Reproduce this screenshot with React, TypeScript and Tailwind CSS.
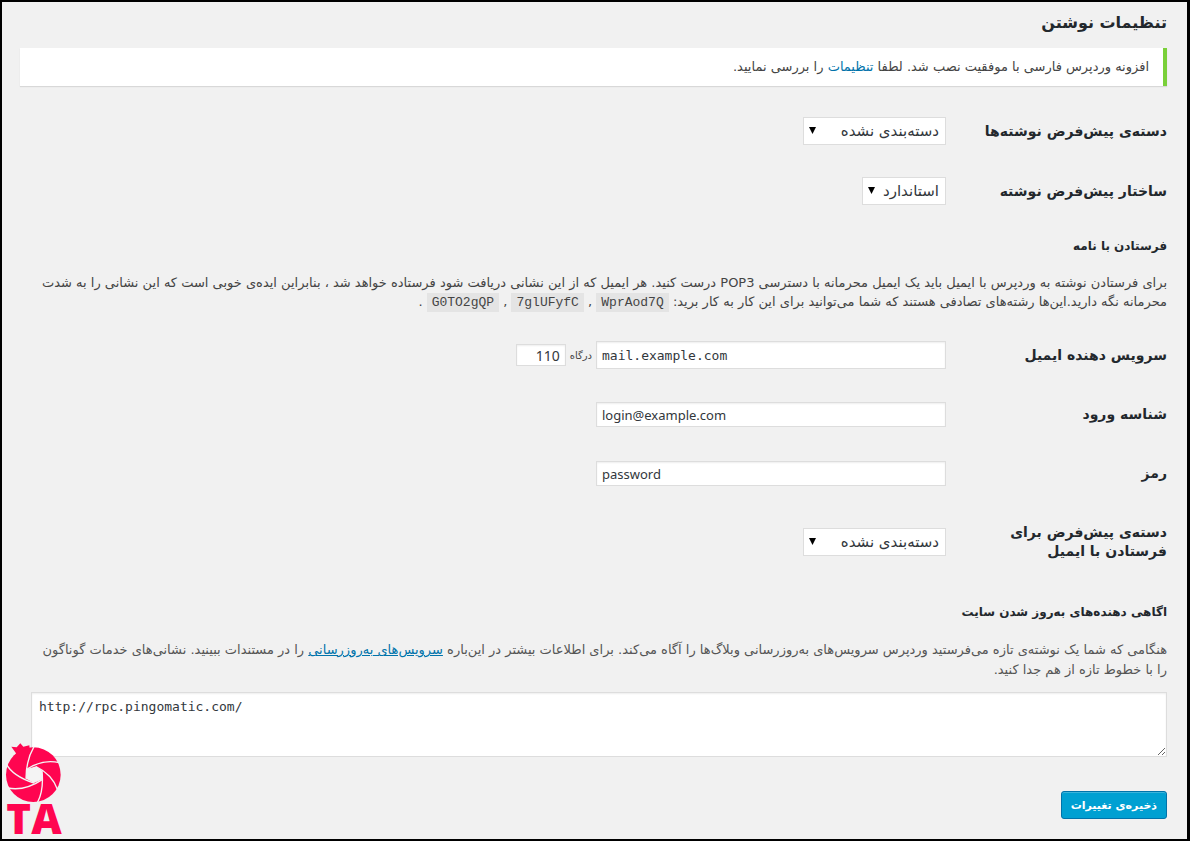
import { useState, type ReactNode } from "react";

const categories = ["دسته‌بندی نشده"];
const formats = ["استاندارد"];
const randomKeys = ["WprAod7Q", "7glUFyfC", "G0TO2gQP"];

const field = "border border-[#ddd] bg-white px-[5px] text-[#32373c] shadow-[inset_0_1px_2px_rgba(0,0,0,0.07)] focus:outline-none focus:border-[#5b9dd9]";

function Row({ id, label, children }: { id: string; label: string; children: ReactNode }) {
    return (
        <div className="flex items-center">
            <label htmlFor={id} className="w-[221px] shrink-0 pl-7 text-sm leading-[19px] font-bold text-[#23282d]">
                {label}
            </label>
            <div className="flex items-center gap-1">{children}</div>
        </div>
    );
}

function Select({ id, options, width }: { id: string; options: string[]; width: string }) {
    return (
        <div className="relative">
            <select
                id={id}
                className={`${width} block h-7 appearance-none border border-[#ddd] bg-white pr-[6px] pl-5 text-[15px] text-[#32373c] focus:outline-none`}
            >
                {options.map((option) => (
                    <option key={option}>{option}</option>
                ))}
            </select>
            <svg viewBox="0 0 6 6" className="pointer-events-none absolute top-[10px] left-[6px] size-[7px]">
                <path d="M0 0h6L3 6z" fill="#000" />
            </svg>
        </div>
    );
}

function Logo() {
    return (
        <div className="pointer-events-none absolute bottom-[6px] left-[2px] w-[60px] text-[#ff0550]" dir="ltr">
            <svg viewBox="0 0 180 180" className="block h-[60px] w-[60px]" fill="currentColor">
                <path d="M28 54 36 34 22 14 38 16 49 4 58 14 76 10 78 32z" />
                <circle cx="88" cy="98" r="82" />
                <path d="M67 82 96 73 114 86 116 112 90 123 66 110z" fill="#f4f4f4" />
                <g fill="none" stroke="#f4f4f4" strokeWidth="4">
                    <path d="M90 14Q66 55 66 110" />
                    <path d="M166 62Q115 50 67 83" />
                    <path d="M160 142Q145 98 96 74" />
                    <path d="M100 182Q120 146 114 86" />
                    <path d="M12 138Q62 148 116 112" />
                    <path d="M6 64Q25 102 90 123" />
                </g>
            </svg>
            <div className="text-center font-['Open_Sans',sans-serif] text-[42px] leading-[31px] font-extrabold">TA</div>
        </div>
    );
}

export default function App() {
    const [server, setServer] = useState("mail.example.com");
    const [port, setPort] = useState("110");
    const [login, setLogin] = useState("login@example.com");
    const [password, setPassword] = useState("password");
    const [services, setServices] = useState("http://rpc.pingomatic.com/");

    return (
        <div
            dir="rtl"
            lang="fa"
            className="relative min-h-screen border-2 border-r-[3px] border-black bg-[#f1f1f1] pt-[9px] pr-5 pb-[18px] pl-[18px] font-['DejaVu_Sans',sans-serif] text-[13px] leading-[19px] text-[#444]"
        >
            <h1 className="text-base leading-6 font-bold text-[#23282d]">تنظیمات نوشتن</h1>

            <div className="mt-[13px] border-r-4 border-[#7ad03a] bg-white px-[14px] py-[10px] leading-[18px] shadow-[0_1px_1px_rgba(0,0,0,0.1)]">
                افزونه وردپرس فارسی با موفقیت نصب شد. لطفا <a href="#settings" className="text-[#0073aa]">تنظیمات</a> را بررسی نمایید.
            </div>

            <form onSubmit={(e) => e.preventDefault()}>
                <div className="mt-[31px] space-y-8">
                    <Row id="category" label="دسته‌ی پیش‌فرض نوشته‌ها">
                        <Select id="category" options={categories} width="w-[143px]" />
                    </Row>
                    <Row id="format" label="ساختار پیش‌فرض نوشته">
                        <Select id="format" options={formats} width="w-[84px]" />
                    </Row>
                </div>

                <h2 className="mt-[31px] text-xs leading-5 font-bold text-[#23282d]">فرستادن با نامه</h2>
                <p className="mt-[17px]">
                    برای فرستادن نوشته به وردپرس با ایمیل باید یک ایمیل محرمانه با دسترسی POP3 درست کنید. هر ایمیل که از این نشانی دریافت شود فرستاده خواهد شد ، بنابراین ایده‌ی خوبی است که این نشانی را به شدت محرمانه نگه دارید.این‌ها رشته‌های تصادفی هستند که شما می‌توانید برای این کار به کار برید:{" "}
                    {randomKeys.map((key, i) => (
                        <span key={key}>
                            <code dir="ltr" className="bg-[#e4e4e4] px-[5px] py-[2px] font-['Liberation_Mono',monospace] text-[13px]">{key}</code>
                            {i < randomKeys.length - 1 ? " , " : " ."}
                        </span>
                    ))}
                </p>

                <div className="mt-[29px]">
                    <Row id="server" label="سرویس دهنده ایمیل">
                        <input
                            id="server"
                            dir="ltr"
                            value={server}
                            onChange={(e) => setServer(e.target.value)}
                            className={`${field} h-7 w-[350px] font-['DejaVu_Sans_Mono',monospace] text-[13px]`}
                        />
                        <label htmlFor="port" className="text-[10px]">درگاه</label>
                        <input
                            id="port"
                            value={port}
                            onChange={(e) => setPort(e.target.value)}
                            className={`${field} h-[22px] w-[50px] font-['Noto_Sans',sans-serif] text-sm`}
                        />
                    </Row>
                </div>
                <div className="mt-[33px] space-y-[34px]">
                    <Row id="login" label="شناسه ورود">
                        <input
                            id="login"
                            dir="ltr"
                            value={login}
                            onChange={(e) => setLogin(e.target.value)}
                            className={`${field} h-[25px] w-[350px] font-['Noto_Sans',sans-serif] text-[13px]`}
                        />
                    </Row>
                    <Row id="password" label="رمز">
                        <input
                            id="password"
                            dir="ltr"
                            value={password}
                            onChange={(e) => setPassword(e.target.value)}
                            className={`${field} h-[25px] w-[350px] font-['Noto_Sans',sans-serif] text-[13px]`}
                        />
                    </Row>
                </div>
                <div className="mt-[37px]">
                    <Row id="mail-category" label="دسته‌ی پیش‌فرض برای فرستادن با ایمیل">
                        <Select id="mail-category" options={categories} width="w-[143px]" />
                    </Row>
                </div>

                <h2 className="mt-[41px] text-xs leading-5 font-bold text-[#23282d]">اگاهی دهنده‌های به‌روز شدن سایت</h2>
                <p className="mt-[18px] leading-5 text-[#555]">
                    هنگامی که شما یک نوشته‌ی تازه می‌فرستید وردپرس سرویس‌های به‌روزرسانی وبلاگ‌ها را آگاه می‌کند. برای اطلاعات بیشتر در این‌باره{" "}
                    <a href="#services" className="text-[#0073aa] underline">سرویس‌های به‌روزرسانی</a> را در مستندات ببینید. نشانی‌های خدمات گوناگون
                    <br />
                    را با خطوط تازه از هم جدا کنید.
                </p>
                <div className="mt-3 pl-[11px]">
                    <textarea
                        id="services"
                        dir="ltr"
                        aria-label="سرویس‌های به‌روزرسانی"
                        value={services}
                        onChange={(e) => setServices(e.target.value)}
                        className={`${field} block h-[65px] w-full px-[7px] py-1 font-['DejaVu_Sans_Mono',monospace] text-[13px] leading-[19px]`}
                    />
                </div>

                <button
                    type="submit"
                    className="mt-[34px] block h-7 rounded-[3px] border border-[#0073aa] bg-[#00a0d2] px-[9px] text-[11px] font-bold text-white shadow-[inset_0_1px_0_rgba(120,200,230,0.5)]"
                >
                    ذخیره‌ی تغییرات
                </button>
            </form>

            <Logo />
        </div>
    );
}
